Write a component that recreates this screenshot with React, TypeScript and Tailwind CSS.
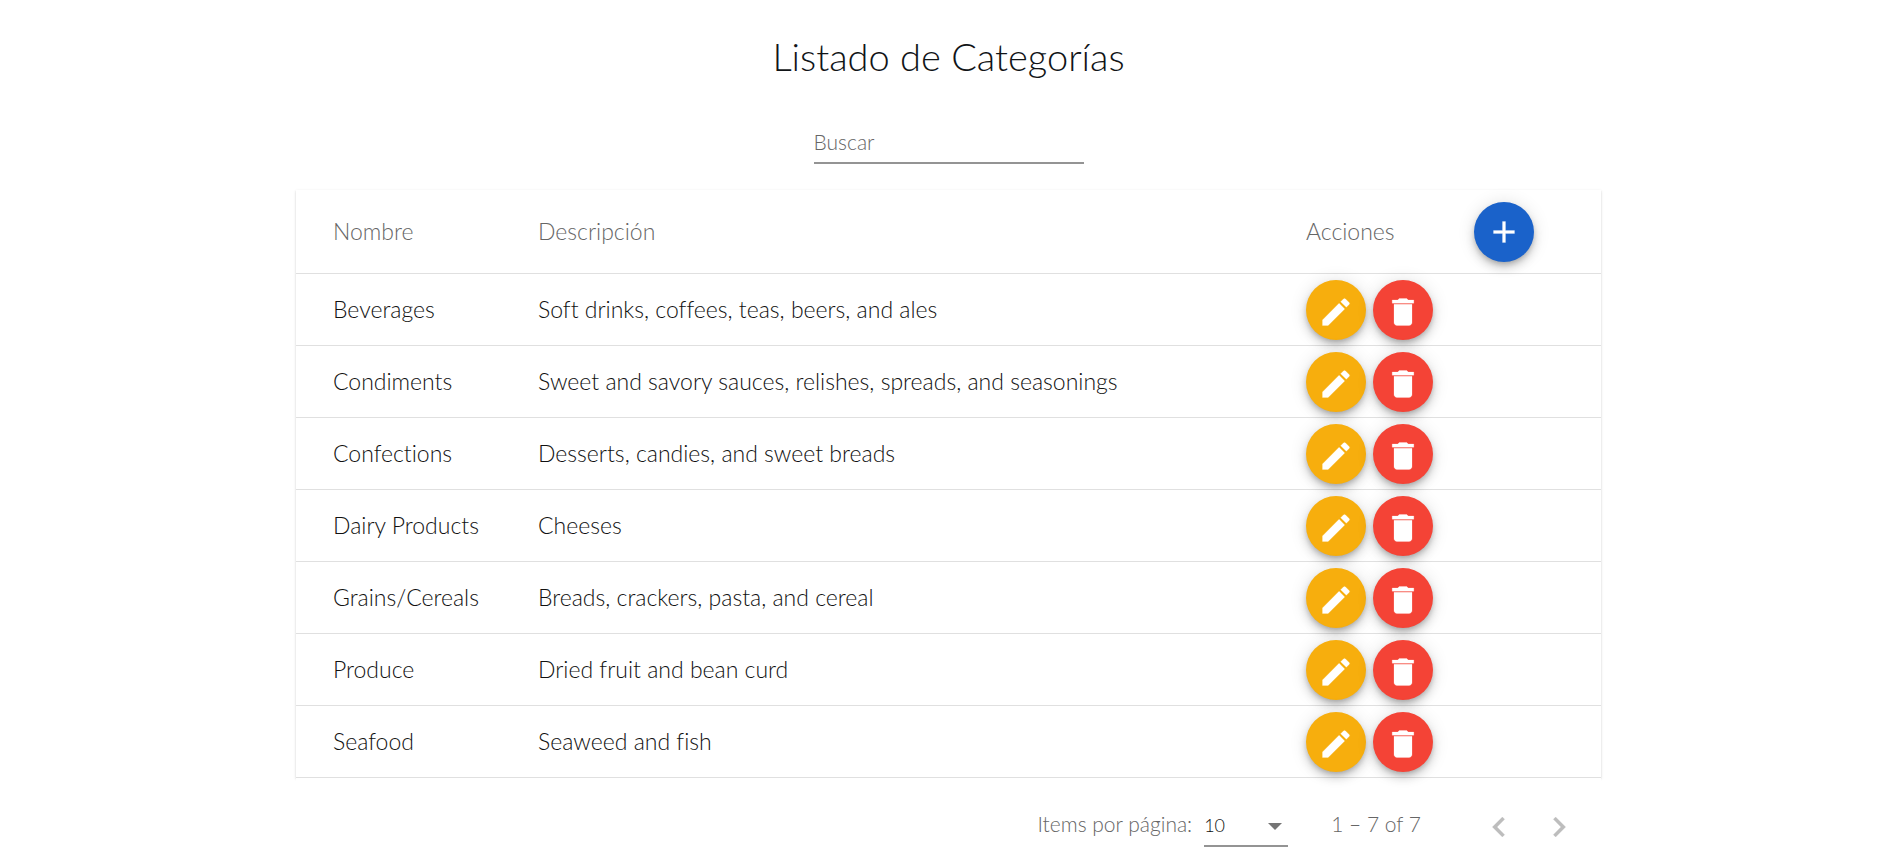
import { useState } from "react";

type Category = { name: string; description: string };

const categories: Category[] = [
  { name: "Beverages", description: "Soft drinks, coffees, teas, beers, and ales" },
  { name: "Condiments", description: "Sweet and savory sauces, relishes, spreads, and seasonings" },
  { name: "Confections", description: "Desserts, candies, and sweet breads" },
  { name: "Dairy Products", description: "Cheeses" },
  { name: "Grains/Cereals", description: "Breads, crackers, pasta, and cereal" },
  { name: "Produce", description: "Dried fruit and bean curd" },
  { name: "Seafood", description: "Seaweed and fish" },
];

const icons = {
  add: "M19 13h-6v6h-2v-6H5v-2h6V5h2v6h6v2z",
  edit: "M3 17.25V21h3.75L17.81 9.94l-3.75-3.75L3 17.25zM20.71 7.04a1 1 0 0 0 0-1.41l-2.34-2.34a1 1 0 0 0-1.41 0l-1.83 1.83 3.75 3.75 1.83-1.83z",
  remove: "M6 19c0 1.1.9 2 2 2h8c1.1 0 2-.9 2-2V6.8H6V19zM19 4h-3.5l-1-1h-5l-1 1H4.8v2.1h14.4V4z",
  previous: "M15.41 7.41L14 6l-6 6 6 6 1.41-1.41L10.83 12z",
  next: "M10 6L8.59 7.41 13.17 12l-4.58 4.59L10 18l6-6z",
};

function Icon({ path, className }: { path: string; className: string }) {
  return (
    <svg viewBox="0 0 24 24" className={className} fill="currentColor" stroke="currentColor" strokeWidth="0.15" aria-hidden="true">
      <path d={path} />
    </svg>
  );
}

function Fab({ label, path, color }: { label: string; path: string; color: string }) {
  return (
    <button
      type="button"
      aria-label={label}
      className={`relative flex size-[60px] shrink-0 items-center justify-center rounded-full text-white shadow-[0_3px_5px_-1px_rgba(0,0,0,0.2),0_6px_10px_0_rgba(0,0,0,0.14),0_1px_18px_0_rgba(0,0,0,0.12)] ${color}`}
    >
      <Icon path={path} className="size-9" />
    </button>
  );
}

export default function App() {
  const [filter, setFilter] = useState("");
  const rows = categories.filter((c) =>
    `${c.name} ${c.description}`.toLowerCase().includes(filter.toLowerCase()),
  );

  return (
    <main className="flex flex-col items-center bg-white pl-2 pt-[34px] font-['Lato',sans-serif] font-light text-[#111111] [font-variant-ligatures:none]">
      <h1 className="text-[38px] leading-[44px] text-[#111417]">Listado de Categorías</h1>

      <input
        type="text"
        aria-label="Buscar"
        placeholder="Buscar"
        value={filter}
        onChange={(e) => setFilter(e.target.value)}
        className="mt-11 h-[42px] w-[270px] border-b-2 border-[#949494] bg-transparent pb-0.5 text-[21px] outline-none placeholder:text-[#666666]"
      />

      <section className="mt-[26px] w-full max-w-[1305px]">
        <table className="w-full table-fixed border-separate border-spacing-0 text-left text-[23px] leading-7 shadow-[0_2px_1px_-1px_rgba(0,0,0,0.2),0_1px_1px_0_rgba(0,0,0,0.14),0_1px_3px_0_rgba(0,0,0,0.12)]">
          <colgroup>
            <col className="w-[242px]" />
            <col />
            <col className="w-[168px]" />
            <col className="w-[127px]" />
          </colgroup>
          <thead>
            <tr className="h-[84px] text-[#666666]">
              <th className="border-b border-[#e0e0e0] pb-0.5 pl-[37px] font-light">Nombre</th>
              <th className="border-b border-[#e0e0e0] pb-0.5 font-light">Descripción</th>
              <th className="border-b border-[#e0e0e0] pb-0.5 font-light">Acciones</th>
              <th className="border-b border-[#e0e0e0]">
                <Fab label="Agregar categoría" path={icons.add} color="bg-[#1a62ca]" />
              </th>
            </tr>
          </thead>
          <tbody>
            {rows.map((c) => (
              <tr key={c.name} className="h-[72px]">
                <td className="border-b border-[#e0e0e0] pb-0.5 pl-[37px]">{c.name}</td>
                <td className="border-b border-[#e0e0e0] pb-0.5">{c.description}</td>
                <td className="border-b border-[#e0e0e0]" colSpan={2}>
                  <div className="flex gap-[7px]">
                    <Fab label={`Editar ${c.name}`} path={icons.edit} color="bg-[#f7ae0d] pt-1" />
                    <Fab label={`Eliminar ${c.name}`} path={icons.remove} color="bg-[#f44336] pt-1" />
                  </div>
                </td>
              </tr>
            ))}
          </tbody>
        </table>

        <div className="flex items-center justify-end bg-white pr-3 pt-5 text-[21px] leading-[52px] text-[#666666]">
          <label htmlFor="page-size">Items por página:</label>
          <div className="ml-3 grid w-[84px] items-center">
            <select
              id="page-size"
              defaultValue="10"
              className="col-start-1 row-start-1 h-[46px] appearance-none border-b-2 border-[#949494] bg-transparent pt-1 text-[18px] leading-6 text-[#111111] outline-none"
            >
              <option>5</option>
              <option>10</option>
              <option>20</option>
            </select>
            <svg
              viewBox="0 0 14 7"
              className="pointer-events-none col-start-1 row-start-1 mt-1 mr-[6px] h-[7px] w-[14px] justify-self-end"
              fill="#757575"
              aria-hidden="true"
            >
              <path d="M0 0h14L7 7z" />
            </svg>
          </div>
          <span className="ml-[43px]">1 – 7 of 7</span>
          <div className="ml-12 flex text-[#bdbdbd]">
            <button type="button" aria-label="Página anterior" disabled className="flex h-[52px] w-[60px] items-center justify-center pt-1.5">
              <Icon path={icons.previous} className="size-10" />
            </button>
            <button type="button" aria-label="Página siguiente" disabled className="flex h-[52px] w-[60px] items-center justify-center pt-1.5">
              <Icon path={icons.next} className="size-10" />
            </button>
          </div>
        </div>
      </section>
    </main>
  );
}
